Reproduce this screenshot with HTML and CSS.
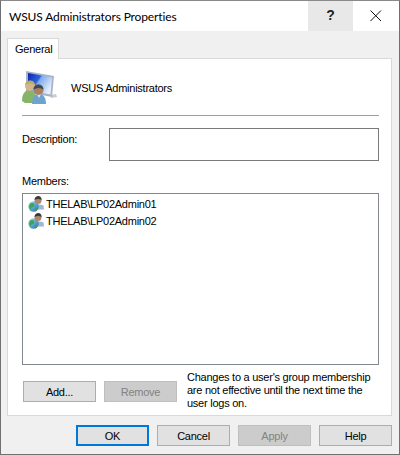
FILE: index.html
```html
<!DOCTYPE html>
<html lang="en">
  <head>
    <meta charset="UTF-8" />
    <title>WSUS Administrators Properties</title>
    <link rel="stylesheet" href="styles.css">
  </head>
  <body>
    <svg width="0" height="0" class="defs">
      <defs>
        <linearGradient id="globe" x1="0" y1="0" x2="1" y2="1">
          <stop offset="0" stop-color="#a6def5" />
          <stop offset="1" stop-color="#1c6fb5" />
        </linearGradient>
        <linearGradient id="screen" x1="0" y1="0" x2="1" y2="0.6">
          <stop offset="0" stop-color="#0a22b0" />
          <stop offset="0.45" stop-color="#2f66dc" />
          <stop offset="0.5" stop-color="#7fa8ee" />
          <stop offset="1" stop-color="#e4eefb" />
        </linearGradient>
        <symbol id="user-icon" viewBox="0 0 16 16">
          <path d="M7 9.500c2-1.500 6-1.500 8.500 0l.5 4H8z" fill="#9fb6d2" />
          <circle cx="5.500" cy="10.500" r="5.200" fill="url(#globe)" />
          <path d="M2 7.500l3-.5 1.500 2-1 2-2 .5-.5 2.500-2-3zM6.500 13.500l2-1.500 1.500 1-2.500 2.500z" fill="#3fa648" />
          <circle cx="10" cy="4.500" r="3.500" fill="#a98a70" />
          <path d="M6.500 4C6.700 1 8.500 0 10.300 0s3.400 1.200 3.400 4C11.500 2.500 8.500 2.500 6.500 4z" fill="#3f3a36" />
        </symbol>
      </defs>
    </svg>
    <div class="window">
      <div class="titlebar">
        <div class="titlebar__text">WSUS Administrators Properties</div>
        <div class="titlebar__help">?</div>
        <div class="titlebar__close">
          <svg width="12" height="12" viewBox="0 0 12 12">
            <path d="M.5.500l10.500 10.500M11 .500L.5 11" stroke="#111" stroke-width="1" fill="none" />
          </svg>
        </div>
      </div>
      <div class="dialog">
        <div class="tabs">
          <div class="tab">General</div>
        </div>
        <div class="panel">
          <div class="head">
            <svg class="head__icon" width="36" height="33" viewBox="0 0 36 33">
              <path d="M29 27l6-1-1-3-5 1z" fill="#c9ccd0" />
              <path d="M4 0l28 5-2 21-26-5z" fill="#aab4c6" />
              <path d="M6 2l24 4.500-1.500 17L6 19z" fill="url(#screen)" />
              <path d="M0 30c0-7 3-11 7-11s8 4 8 11l-3 2H3z" fill="#86b56a" />
              <circle cx="8" cy="15" r="5" fill="#d4b48c" />
              <path d="M3 14C3.500 10.500 6 9.500 8.500 9.500s4.500 1.500 4.500 4.500C10 12 6 12 3 14z" fill="#b8ad58" />
              <path d="M10 33c0-7 3-10 7-10s7 3 7 10z" fill="#6fa3cf" />
              <path d="M15 23l2 4 2-4z" fill="#dfeaf4" />
              <circle cx="16.500" cy="19" r="5" fill="#a98062" />
              <path d="M11.500 18.500C11.500 15 14 13.500 16.500 13.500s5 1.500 5 5C18.500 16.500 15 16.500 11.500 18.500z" fill="#444a4c" />
            </svg>
            <div class="head__name">WSUS Administrators</div>
          </div>
          <div class="sep"></div>
          <div class="desc">
            <div class="desc__label">Description:</div>
            <div class="desc__input"></div>
          </div>
          <div class="members-label">Members:</div>
          <div class="members">
            <div class="member">
              <svg class="member__icon" width="16" height="16"><use href="#user-icon" /></svg>
              THELAB\LP02Admin01
            </div>
            <div class="member">
              <svg class="member__icon" width="16" height="16"><use href="#user-icon" /></svg>
              THELAB\LP02Admin02
            </div>
          </div>
          <div class="actions">
            <div class="btn">Add...</div>
            <div class="btn btn_disabled">Remove</div>
            <div class="note">Changes to a user's group membership are not effective until the next time the user logs on.</div>
          </div>
        </div>
        <div class="footer">
          <div class="btn btn_default">OK</div>
          <div class="btn">Cancel</div>
          <div class="btn btn_disabled">Apply</div>
          <div class="btn">Help</div>
        </div>
      </div>
    </div>
  </body>
</html>
```

FILE: styles.css
```css
* {
  box-sizing: border-box;
}

body {
  margin: 0;
  font: 11px "Liberation Sans", Arial, sans-serif;
  letter-spacing: -0.25px;
  color: #000;
}

.defs {
  display: block;
  height: 0;
}

.window {
  width: 400px;
  height: 455px;
  border: 1px solid #707070;
  border-top-color: #8a8a8a;
  background-color: #f0f0f0;
  display: flex;
  flex-direction: column;
}

.titlebar {
  height: 30px;
  flex: none;
  background-color: #fff;
  display: flex;
  align-items: center;
}

.titlebar__text {
  flex: 1;
  padding-left: 8px;
  font: 12px Lato, "Liberation Sans", sans-serif;
  letter-spacing: -0.13px;
}

.titlebar__help {
  width: 45px;
  height: 30px;
  background-color: #e8e8e8;
  text-align: center;
  font: bold 14px/29px "Liberation Sans", Arial, sans-serif;
  color: #222;
}

.titlebar__close {
  width: 46px;
  height: 30px;
  display: flex;
  align-items: center;
  justify-content: center;
}

.dialog {
  flex: 1;
  padding: 7px 7px 0 6px;
  display: flex;
  flex-direction: column;
}

.tabs {
  height: 21px;
  flex: none;
  display: flex;
  position: relative;
  z-index: 1;
}

.tab {
  width: 52px;
  height: 21px;
  background-color: #fff;
  border: 1px solid #d9d9d9;
  border-bottom: none;
  padding: 4px 0 0 7px;
}

.panel {
  width: 385px;
  height: 358px;
  flex: none;
  margin-top: -1px;
  background-color: #fff;
  border: 1px solid #d9d9d9;
  padding: 12px 12px 0 14px;
}

.head {
  height: 33px;
  margin-bottom: 11px;
  display: flex;
  align-items: center;
}

.head__icon {
  margin-right: 13px;
  flex: none;
}

.sep {
  height: 1px;
  background-color: #a0a0a0;
  margin-bottom: 12px;
}

.desc {
  display: flex;
  height: 33px;
}

.desc__label {
  width: 87px;
  padding-top: 5px;
}

.desc__input {
  flex: 1;
  border: 1px solid #7a7a7a;
  background-color: #fff;
}

.members-label {
  margin-top: 14px;
  height: 18px;
}

.members {
  height: 172px;
  border: 1px solid #828790;
  padding: 1px 0 0 5px;
}

.member {
  display: flex;
  align-items: center;
  gap: 2px;
  height: 17px;
}

.member__icon {
  flex: none;
}

.actions {
  display: flex;
  margin-top: 6px;
  padding-left: 1px;
  align-items: flex-start;
}

.actions .btn {
  margin-top: 10px;
  margin-right: 8px;
}

.note {
  margin-left: 2px;
  width: 192px;
  line-height: 13px;
}

.footer {
  display: flex;
  justify-content: flex-end;
  gap: 8px;
  padding-top: 9px;
}

.btn {
  width: 73px;
  height: 21px;
  flex: none;
  background-color: #e1e1e1;
  border: 1px solid #adadad;
  display: flex;
  align-items: center;
  justify-content: center;
}

.btn_default {
  border: 2px solid #0078d7;
}

.btn_disabled {
  background-color: #ccc;
  border-color: #bfbfbf;
  color: #838383;
}
```
